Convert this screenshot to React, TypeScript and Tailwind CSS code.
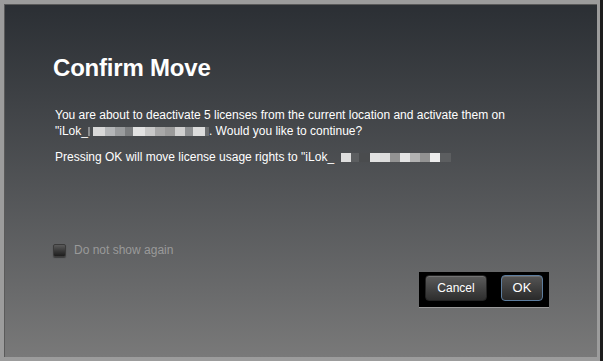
import React from 'react';

const font = { fontFamily: '"Liberation Sans", Arial, sans-serif' };

const Redact: React.FC<{ blocks: [number, string][] }> = ({ blocks }) => (
    <span className="inline-flex items-center align-middle h-[10px]">
        {blocks.map(([w, c], i) => (
            <span key={i} className="inline-block h-[9px]" style={{ width: w, background: c }} />
        ))}
    </span>
);

const App: React.FC = () => {
    return (
        <div className="w-[603px] h-[361px] flex bg-[#1c1c1c]" style={font}>
            <div className="w-[600px] h-[361px] bg-[#9c9c9c] pl-[4px] pt-[4px] pr-[3px] pb-[4px]">
                <div className="h-full w-full flex flex-col bg-gradient-to-b from-[#2b2f34] to-[#797979] border-l border-t border-[#5a5a5a]">
                    <h1 className="text-white font-bold text-[24px] leading-none ml-[48px] mt-[51px] tracking-[-0.2px]">
                        Confirm Move
                    </h1>
                    <div className="ml-[50px] mt-[27px] text-white text-[12px] leading-[16px]">
                        <p>You are about to deactivate 5 licenses from the current location and activate them on</p>
                        <p>
                            "iLok_
                            <Redact blocks={[[2, '#8a8c8e'], [3, '#4a4d50'], [12, '#d8d8d8'], [10, '#b4b6b8'], [10, '#9a9c9e'], [8, '#7c7e80'], [12, '#e2e2e2'], [10, '#c8c8c8'], [10, '#a8a8a8'], [10, '#9a9a9a'], [10, '#d0d0d0'], [8, '#8f9193'], [12, '#dcdcdc'], [4, '#6a6c6e']]} />
                            . Would you like to continue?
                        </p>
                        <p className="mt-[10px]">
                            Pressing OK will move license usage rights to "iLok_{' '}
                            <span className="ml-[4px]" />
                            <Redact blocks={[[10, '#dedede'], [8, '#5c5e60'], [11, '#4a4c4e'], [10, '#e2e2e2'], [10, '#dcdcdc'], [10, '#939393'], [10, '#e4e4e4'], [10, '#b2b2b2'], [10, '#929292'], [10, '#ececec'], [11, '#5c5e60']]} />
                        </p>
                    </div>
                    <div className="flex items-center ml-[48px] mt-[76px]">
                        <div className="w-[13px] h-[13px] rounded-[2px] bg-gradient-to-b from-[#5a5a5a] to-[#1e1e1e] border border-[#3a3a3a] shadow-[0_1px_1px_rgba(0,0,0,0.4)]" />
                        <span className="ml-[8px] text-[12px] text-[#9a9a9a]">Do not show again</span>
                    </div>
                    <div className="flex justify-end mt-[13px] mr-[48px]">
                        <div className="flex items-center gap-[14px] bg-black pl-[6px] pr-[6px] pt-[3px] pb-[6px] border-b-[1px] border-[#9a9a9a]">
                            <button className="w-[62px] h-[26px] rounded-[4px] text-white text-[12px] bg-gradient-to-b from-[#5c5c5c] to-[#2e2e2e] border border-[#222] shadow-[inset_0_1px_0_rgba(255,255,255,0.15)]">
                                Cancel
                            </button>
                            <button className="w-[42px] h-[26px] rounded-[4px] text-white text-[13px] bg-gradient-to-b from-[#555] to-[#2a2a2a] border border-[#5d7d9e] shadow-[inset_0_1px_0_rgba(255,255,255,0.15)]">
                                OK
                            </button>
                        </div>
                    </div>
                </div>
            </div>
        </div>
    );
};

export default App;
